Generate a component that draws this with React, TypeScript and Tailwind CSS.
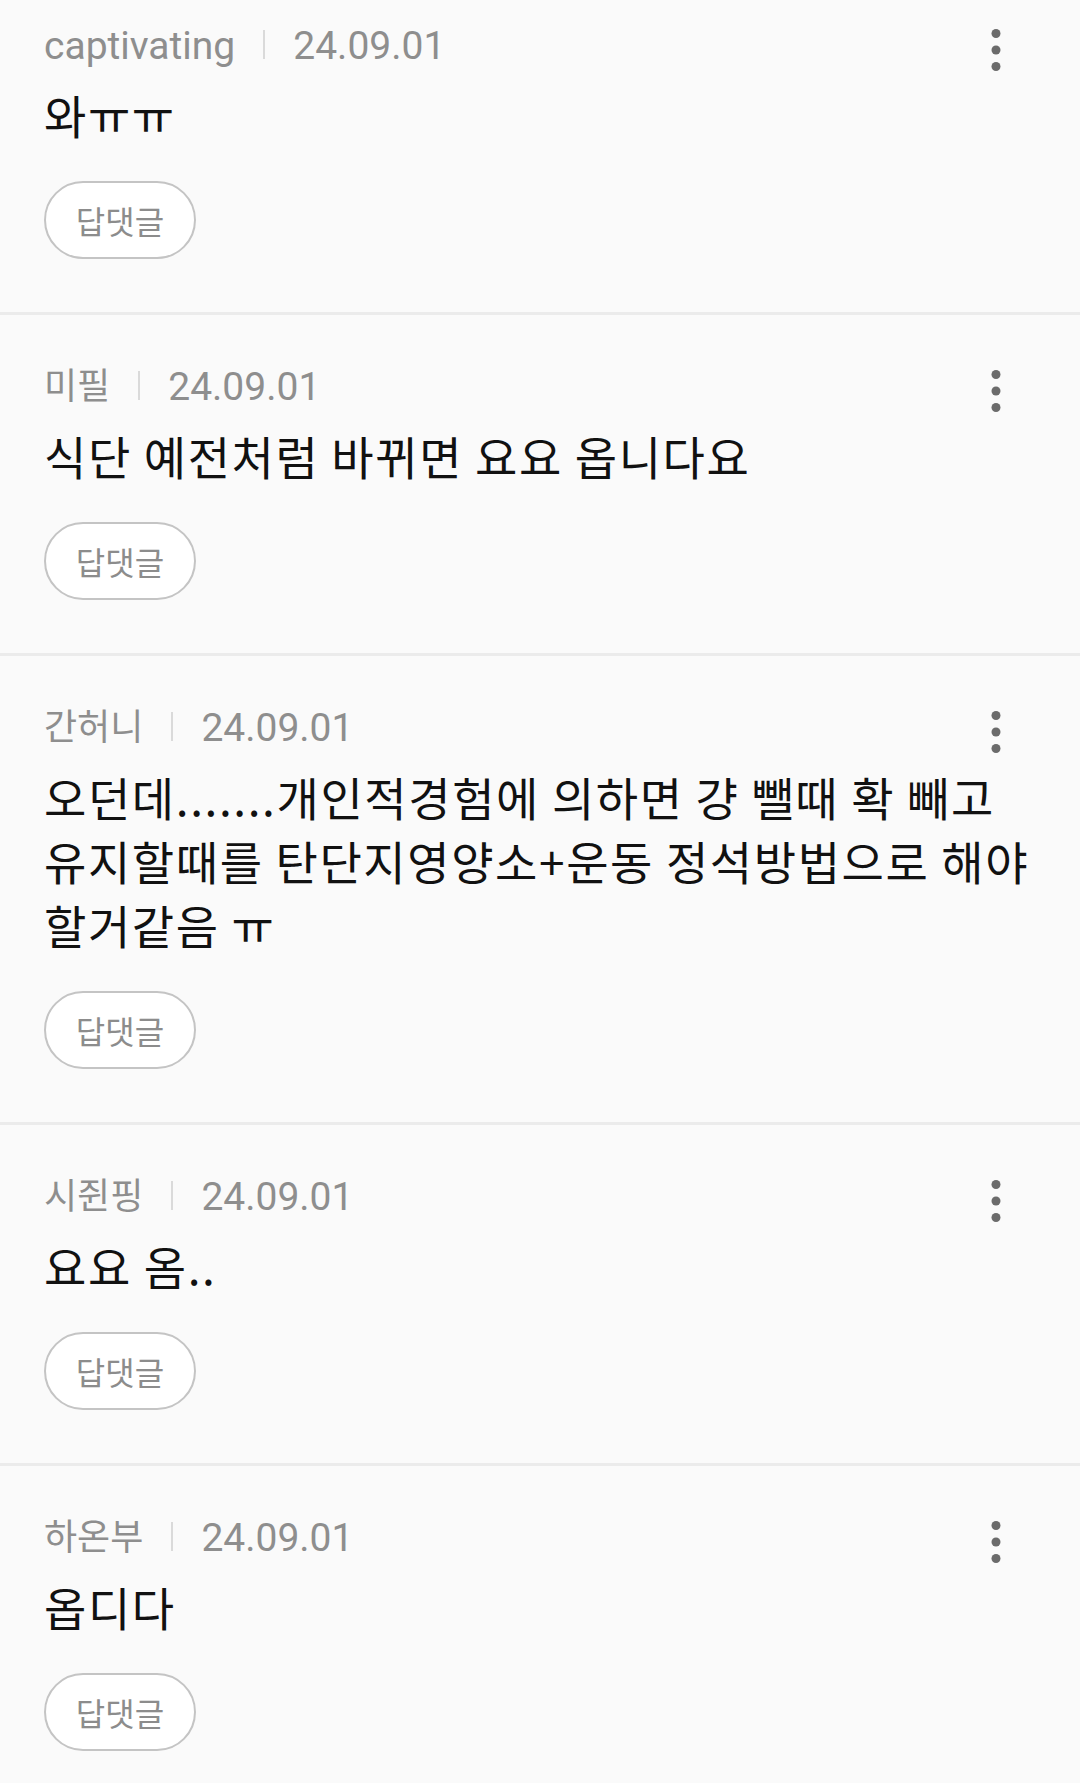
import React from 'react';

type Comment = {
  user: string;
  ko: boolean;
  date: string;
  lines: string[];
};

const comments: Comment[] = [
  { user: 'captivating', ko: false, date: '24.09.01', lines: ['와ㅠㅠ'] },
  { user: '미필', ko: true, date: '24.09.01', lines: ['식단 예전처럼 바뀌면 요요 옵니다요'] },
  {
    user: '간허니',
    ko: true,
    date: '24.09.01',
    lines: [
      '오던데.......개인적경험에 의하면 걍 뺄때 확 빼고',
      '유지할때를 탄단지영양소+운동 정석방법으로 해야',
      '할거같음 ㅠ',
    ],
  },
  { user: '시쥔핑', ko: true, date: '24.09.01', lines: ['요요 옴..'] },
  { user: '하온부', ko: true, date: '24.09.01', lines: ['옵디다'] },
];

const MoreIcon = () => (
  <svg width="10" height="42" viewBox="0 0 10 42" className="mt-[8px] mr-[59px] shrink-0">
    <circle cx="5" cy="4.5" r="4.5" fill="#6b6b6b" />
    <circle cx="5" cy="21" r="4.5" fill="#6b6b6b" />
    <circle cx="5" cy="37.5" r="4.5" fill="#6b6b6b" />
  </svg>
);

const CommentItem = ({ comment, first }: { comment: Comment; first: boolean }) => {
  return (
    <div className={first ? 'pt-[21px] pb-[53px] pl-[44px] pr-[20px]' : 'pt-[47px] pb-[53px] pl-[44px] pr-[20px]'}>
      <div className="flex items-start justify-between h-[50px]">
        <div className="flex items-center h-[50px] text-[39px] leading-[50px] text-[#8e8e8e] font-['Roboto','Noto_Sans_CJK_KR',sans-serif]">
          <span className={comment.ko ? 'text-[36px]' : ''}>{comment.user}</span>
          <span className="mx-[28px] mb-[4px] h-[29px] w-[2px] bg-[#dadada]" />
          <span>{comment.date}</span>
        </div>
        <MoreIcon />
      </div>

      <div className="mt-[11px] text-[46px] leading-[64px] tracking-[1.6px] text-[#111111] break-keep font-['Noto_Sans_CJK_KR',sans-serif]">
        {comment.lines.map((line, i) => (
          <div key={i} className="whitespace-nowrap">
            {line}
          </div>
        ))}
      </div>

      <button className="mt-[35px] flex items-center justify-center w-[152px] h-[78px] rounded-full border-2 border-[#c4c4c4] bg-white text-[32px] text-[#8c8c8c] font-['Noto_Sans_CJK_KR',sans-serif]">
        답댓글
      </button>
    </div>
  );
};

export default function App() {
  return (
    <div className="min-h-screen bg-[#fafafa]">
      {comments.map((c, i) => (
        <div key={i} className={i === 0 ? '' : 'border-t-[3px] border-[#ebebeb]'}>
          <CommentItem comment={c} first={i === 0} />
        </div>
      ))}
    </div>
  );
}
